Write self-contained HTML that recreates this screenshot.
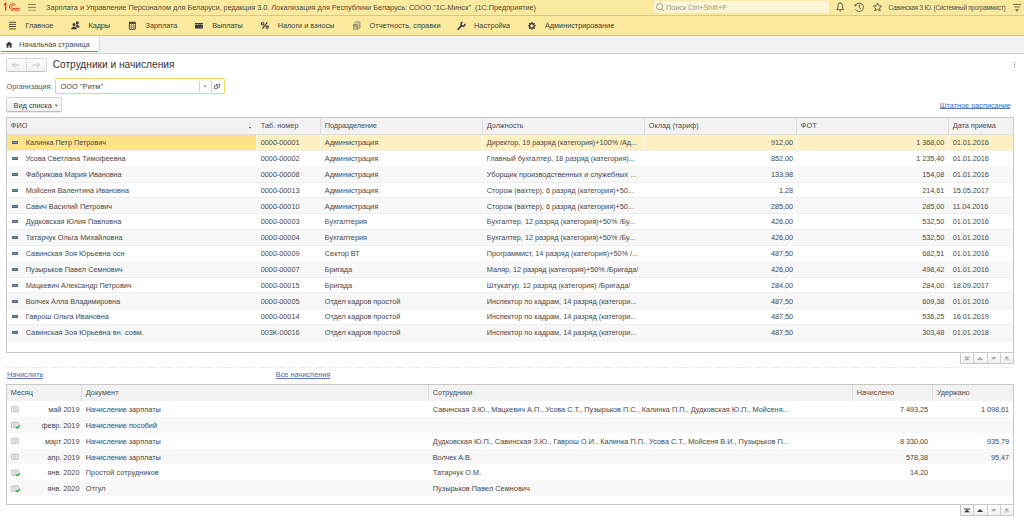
<!DOCTYPE html><html><head><meta charset="utf-8"><style>
*{box-sizing:border-box;margin:0;padding:0}
html,body{width:1024px;height:523px;overflow:hidden;background:#fff;font-family:"Liberation Sans",sans-serif;color:#484848}
.t{position:absolute;white-space:pre;line-height:1}
.r{position:absolute}
svg{position:absolute;overflow:visible}
</style></head><body>
<div class="r" style="left:0px;top:0px;width:1024px;height:15px;background:#faea9f;"></div>
<div class="r" style="left:0px;top:15px;width:1024px;height:1px;background:#d6c886;"></div>
<div class="r" style="left:0px;top:16px;width:1024px;height:19px;background:#fbea9d;"></div>
<div class="r" style="left:0px;top:35px;width:1024px;height:1px;background:#d5c684;"></div>
<div class="r" style="left:0px;top:36px;width:1024px;height:17px;background:#f2f2f2;"></div>
<div class="r" style="left:0px;top:53px;width:1024px;height:1px;background:#d0d0d0;"></div>
<div class="r" style="left:0px;top:36px;width:99px;height:17px;background:#ffffff;"></div>
<div class="r" style="left:99px;top:36px;width:1px;height:17px;background:#dadada;"></div>
<div class="r" style="left:1px;top:51px;width:97px;height:1.4px;background:#3fae5e;"></div>
<div class="t" style="left:46px;top:4px;font-size:7.3333px;color:#4a4a3a;letter-spacing:-0.027px;">Зарплата и Управление Персоналом для Беларуси, редакция 3.0. Локализация для Республики Беларусь: СООО &quot;1С-Минск&quot;  (1С:Предприятие)</div>
<div class="r" style="left:654px;top:1px;width:175px;height:12.3px;background:#fdf6d6;"></div>
<div class="t" style="left:666px;top:4px;font-size:7.3333px;color:#9a9a8a;letter-spacing:-0.045px;">Поиск Ctrl+Shift+F</div>
<div class="t" style="left:888.5px;top:5px;font-size:6.3px;color:#505048;letter-spacing:-0.235px;">Савинская З.Ю. (Системный программист)</div>
<div class="t" style="left:25.6px;top:22px;font-size:7.3333px;color:#3d3d30;letter-spacing:-0.062px;">Главное</div>
<div class="t" style="left:88.6px;top:22px;font-size:7.3333px;color:#3d3d30;letter-spacing:-0.129px;">Кадры</div>
<div class="t" style="left:145.6px;top:22px;font-size:7.3333px;color:#3d3d30;letter-spacing:-0.044px;">Зарплата</div>
<div class="t" style="left:212.3px;top:22px;font-size:7.3333px;color:#3d3d30;letter-spacing:-0.065px;">Выплаты</div>
<div class="t" style="left:277.7px;top:22px;font-size:7.3333px;color:#3d3d30;letter-spacing:-0.022px;">Налоги и взносы</div>
<div class="t" style="left:369.5px;top:22px;font-size:7.3333px;color:#3d3d30;letter-spacing:0.051px;">Отчетность, справки</div>
<div class="t" style="left:474px;top:22px;font-size:7.3333px;color:#3d3d30;letter-spacing:0.007px;">Настройка</div>
<div class="t" style="left:545px;top:22px;font-size:7.3333px;color:#3d3d30;letter-spacing:-0.040px;">Администрирование</div>
<div class="t" style="left:19.1px;top:41px;font-size:7.3333px;color:#4a4a4a;letter-spacing:-0.025px;">Начальная страница</div>
<div class="t" style="left:52.7px;top:60px;font-size:10.17px;color:#333333;">Сотрудники и начисления</div>
<svg style="left:0;top:0" width="1024" height="523"><g fill="none" stroke="#e0352b"><path d="M5.7 10.8 V3.3 L3.9 4.9" stroke-width="1.3"/><path d="M15.5 5.3 A3.2 3.2 0 1 0 12.7 10.1" stroke-width="1.0"/><path d="M14.1 6.1 A1.6 1.6 0 1 0 12.7 8.5" stroke-width="0.9"/><path d="M12.4 8.4 H19.7 M12.4 10.1 H19.7" stroke-width="0.95"/></g><path d="M28.1 4.5 H35.9 M28.1 7.4 H35.9" stroke="#6f6a55" stroke-width="0.9"/><path d="M28.1 10.3 H35.9" stroke="#9e9878" stroke-width="0.9"/><path d="M9 22.3 H16 M9 24.4 H16 M9 26.5 H16" stroke="#46464a" stroke-width="0.95"/><path d="M9 28.9 H16" stroke="#8b8670" stroke-width="1.5"/><circle cx="77.3" cy="22.9" r="1.55" fill="#3e3e42"/><path d="M75.2 27.6 Q75.6 24.8 77.3 24.8 Q79.4 24.8 79.7 27.6z" fill="#3e3e42"/><circle cx="74.0" cy="24.6" r="1.75" fill="#2f2f33" stroke="#fbe99e" stroke-width="0.6"/><path d="M71 29.4 Q71.2 26.4 74 26.4 Q76.8 26.4 77.2 29.4z" fill="#2f2f33" stroke="#fbe99e" stroke-width="0.5"/><rect x="129.3" y="22.2" width="6.1" height="7.2" fill="none" stroke="#3b3b3e" stroke-width="0.9" rx="0.5"/><rect x="129.3" y="22.2" width="6.1" height="1.7" fill="#3b3b3e"/><path d="M131.4 24 V29.3 M133.4 24 V29.3 M129.5 25.8 H135.2 M129.5 27.6 H135.2" stroke="#6a6a60" stroke-width="0.6"/><rect x="195" y="23" width="7.9" height="1.0" fill="#3a3a3e"/><rect x="195" y="24.6" width="7.9" height="3.8" fill="#3a3a3e" rx="0.3"/><rect x="200.6" y="26.6" width="1.6" height="1.0" fill="#77756a"/></svg>
<svg style="left:0;top:0" width="1024" height="523"><circle cx="262.6" cy="23.8" r="1.25" fill="none" stroke="#3a3a3e" stroke-width="1.1"/><circle cx="267.2" cy="27.1" r="1.25" fill="none" stroke="#3a3a3e" stroke-width="1.1"/><path d="M267.3 22.2 L262.4 28.7" stroke="#3a3a3e" stroke-width="1.1"/></svg>
<svg style="left:0;top:0" width="1024" height="523"><path d="M354.8 21.9 H360 V28 H358.6" fill="none" stroke="#9c9674" stroke-width="0.9"/><path d="M353.8 22.9 H359 V29 H357.6" fill="none" stroke="#9c9674" stroke-width="0.9"/><rect x="352.9" y="24" width="5" height="5.6" fill="#9c9674"/><rect x="353.8" y="27.4" width="2.6" height="1.0" fill="#fbe99e"/><path d="M458 29.2 L461.6 25.6" stroke="#3a3a3e" stroke-width="1.6" stroke-linecap="round"/><path d="M464.9 23.9 A2.0 2.0 0 1 1 462.6 22.3" fill="none" stroke="#3a3a3e" stroke-width="1.5"/><g transform="translate(531.9 25.8)"><circle r="2.3" fill="none" stroke="#3a3a3e" stroke-width="1.3"/><path d="M0 -3.9 V-2.4 M0 3.9 V2.4 M-3.9 0 H-2.4 M3.9 0 H2.4 M-2.75 -2.75 L-1.7 -1.7 M2.75 2.75 L1.7 1.7 M-2.75 2.75 L-1.7 1.7 M2.75 -2.75 L1.7 -1.7" stroke="#3a3a3e" stroke-width="1.1"/></g><circle cx="659.6" cy="6.6" r="3.1" fill="none" stroke="#8a8a80" stroke-width="0.8"/><path d="M661.8 8.8 L664 11" stroke="#8a8a80" stroke-width="0.9"/><path d="M836.7 9.6 H843.8 L842.6 8.1 V5.8 Q842.6 3.2 840.2 3.0 Q837.9 3.2 837.9 5.8 V8.1z" fill="none" stroke="#4a4a40" stroke-width="0.85" stroke-linejoin="round"/><path d="M839.1 10.4 H841.3 L840.2 11.7z" fill="#4a4a40"/><path d="M840.2 2.2 V3.0" stroke="#4a4a40" stroke-width="0.8"/><path d="M855.4 5.4 A4.2 4.2 0 1 1 855.4 9.2" fill="none" stroke="#4a4a40" stroke-width="0.85"/><path d="M854.3 4.2 L856.9 4.9 L855.2 6.8z" fill="#4a4a40"/><path d="M859.3 4.6 V7.6 L860.9 9" fill="none" stroke="#4a4a40" stroke-width="0.85"/><path d="M877.5 3.1 L878.8 5.8 L881.7 6.1 L879.5 8.0 L880.2 10.8 L877.5 9.3 L874.8 10.8 L875.5 8.0 L873.3 6.1 L876.2 5.8z" fill="none" stroke="#4a4a40" stroke-width="0.85" stroke-linejoin="round"/><path d="M1012.9 4.4 H1021.2 M1014.0 6.9 H1020.1 M1015.3 9.6 H1018.8" stroke="#4a4a40" stroke-width="0.8"/><path d="M1016.3 10.8 H1017.8" stroke="#2a2a2a" stroke-width="1.0"/><path d="M5.6 44.6 L9.1 41.4 L12.6 44.6 H11.6 V47.8 H6.6 V44.6z" fill="#3a3a3a"/><rect x="8.4" y="45.6" width="1.4" height="2.3" fill="#fff"/></svg>
<div class="r" style="left:6px;top:58px;width:41px;height:14px;background:linear-gradient(#fdfdfd,#f1f1f1);border:1px solid #d8d8d8;border-bottom-color:#c4c4c4;border-radius:2px;"></div>
<div class="r" style="left:26px;top:59px;width:1px;height:12px;background:#dcdcdc;"></div>
<svg style="left:0;top:0" width="1024" height="523"><path d="M12.5 65 h7 M12.5 65 l2.6 -2.6 M12.5 65 l2.6 2.6" stroke="#c4c4c4" stroke-width="1" fill="none"/><path d="M39.5 65 h-7 M39.5 65 l-2.6 -2.6 M39.5 65 l-2.6 2.6" stroke="#c4c4c4" stroke-width="1" fill="none"/></svg>
<div class="t" style="left:6.6px;top:83px;font-size:7.3333px;color:#555555;letter-spacing:-0.036px;">Организация:</div>
<div class="r" style="left:55px;top:78.3px;width:169.6px;height:15.6px;background:#ffffff;border:1.4px solid #f7d35a;border-radius:1.5px;"></div>
<div class="t" style="left:60.5px;top:83px;font-size:7.3333px;color:#404040;letter-spacing:0.092px;">ООО &quot;Ритм&quot;</div>
<div class="r" style="left:199px;top:80.6px;width:1px;height:11.4px;background:#d2d2d2;"></div>
<div class="r" style="left:211px;top:80.6px;width:1px;height:11.4px;background:#d2d2d2;"></div>
<svg style="left:0;top:0" width="1024" height="523"><path d="M203.9 85.8 h2.4 l-1.2 1.3z" fill="#333"/><rect x="216.3" y="84.3" width="3.4" height="2.8" fill="#fff" stroke="#555" stroke-width="0.7"/><rect x="214.5" y="85.9" width="3.0" height="2.6" fill="#fff" stroke="#555" stroke-width="0.7"/></svg>
<div class="r" style="left:6px;top:97px;width:56px;height:15px;background:linear-gradient(#fdfdfd,#f0f0f0);border:1px solid #d4d4d4;border-bottom-color:#bdbdbd;border-radius:2px;box-shadow:0 1px 1px rgba(0,0,0,0.10);"></div>
<div class="t" style="left:13.6px;top:102px;font-size:7.3333px;color:#444444;letter-spacing:0.001px;">Вид списка</div>
<svg style="left:0;top:0" width="1024" height="523"><path d="M54.8 104.8 h3 l-1.5 1.6z" fill="#555"/></svg>
<div class="t" style="left:939.8px;top:102px;font-size:7.3333px;color:#4169b5;letter-spacing:-0.016px;">Штатное расписание</div>
<div class="r" style="left:939.8px;top:108.4px;width:70.53333333333333px;height:0.8px;background:#5a7fc0;"></div>
<div class="r" style="left:1014.3px;top:62.2px;width:0.9px;height:1.0px;background:#777;"></div>
<div class="r" style="left:1014.3px;top:64.3px;width:0.9px;height:1.0px;background:#777;"></div>
<div class="r" style="left:1014.3px;top:66.4px;width:0.9px;height:1.0px;background:#777;"></div>
<div class="r" style="left:6px;top:117px;width:1008px;height:236px;background:#ffffff;border:1px solid #c9c9c9;"></div>
<div class="r" style="left:7px;top:118px;width:1006px;height:16px;background:#f2f2f2;"></div>
<div class="r" style="left:7px;top:134px;width:1006px;height:1px;background:#dddde2;"></div>
<div class="r" style="left:256px;top:118px;width:1px;height:16px;background:#f7f7f7;"></div>
<div class="r" style="left:320px;top:118px;width:1px;height:16px;background:#dcdcdc;"></div>
<div class="r" style="left:482px;top:118px;width:1px;height:16px;background:#dcdcdc;"></div>
<div class="r" style="left:644px;top:118px;width:1px;height:16px;background:#dcdcdc;"></div>
<div class="r" style="left:796px;top:118px;width:1px;height:16px;background:#dcdcdc;"></div>
<div class="r" style="left:948px;top:118px;width:1px;height:16px;background:#dcdcdc;"></div>
<div class="t" style="left:10.8px;top:122px;font-size:7.3333px;color:#4d4d4d;letter-spacing:0.039px;">ФИО</div>
<div class="t" style="left:260.8px;top:122px;font-size:7.3333px;color:#4d4d4d;letter-spacing:-0.016px;">Таб. номер</div>
<div class="t" style="left:324.8px;top:122px;font-size:7.3333px;color:#4d4d4d;letter-spacing:-0.109px;">Подразделение</div>
<div class="t" style="left:486.8px;top:122px;font-size:7.3333px;color:#4d4d4d;letter-spacing:-0.060px;">Должность</div>
<div class="t" style="left:648.8px;top:122px;font-size:7.3333px;color:#4d4d4d;letter-spacing:-0.009px;">Оклад (тариф)</div>
<div class="t" style="left:800.8px;top:122px;font-size:7.3333px;color:#4d4d4d;letter-spacing:0.080px;">ФОТ</div>
<div class="t" style="left:952.8px;top:122px;font-size:7.3333px;color:#4d4d4d;letter-spacing:-0.048px;">Дата приема</div>
<svg style="left:0;top:0" width="1024" height="523"><path d="M250 122.2 v5.2" stroke="#d4cccc" stroke-width="0.9"/><path d="M248.8 127 h2.4 l-1.2 1.7z" fill="#555"/></svg>
<div class="r" style="left:7px;top:134.6px;width:1006px;height:15.3px;background:#fdf0c3;"></div>
<div class="r" style="left:7px;top:134.6px;width:249px;height:15.3px;background:#fde38a;"></div>
<div class="r" style="left:256px;top:134.6px;width:1px;height:15.3px;background:#fffbe8;"></div>
<div class="r" style="left:320px;top:134.6px;width:1px;height:15.3px;background:#fffbe8;"></div>
<div class="r" style="left:482px;top:134.6px;width:1px;height:15.3px;background:#fffbe8;"></div>
<div class="r" style="left:644px;top:134.6px;width:1px;height:15.3px;background:#fffbe8;"></div>
<div class="r" style="left:796px;top:134.6px;width:1px;height:15.3px;background:#fffbe8;"></div>
<div class="r" style="left:948px;top:134.6px;width:1px;height:15.3px;background:#fffbe8;"></div>
<div class="r" style="left:7px;top:149.9px;width:1006px;height:1px;background:#eeeeee;"></div>
<div class="r" style="left:12.3px;top:141.0px;width:5.8px;height:2.9px;background:#6f9fd4;border:0.8px solid #4f6078;border-radius:0.4px;"></div>
<div class="t" style="left:25.7px;top:139px;font-size:7.3333px;color:#484848;letter-spacing:-0.044px;">Калинка Петр Петрович</div>
<div class="t" style="left:260.8px;top:139px;font-size:7.3333px;color:#484848;letter-spacing:-0.048px;">0000-00001</div>
<div class="t" style="left:324.8px;top:139px;font-size:7.3333px;color:#484848;letter-spacing:-0.044px;">Администрация</div>
<div class="t" style="left:486.8px;top:139px;font-size:7.3333px;color:#484848;letter-spacing:-0.054px;">Директор, 19 разряд (категория)+100% /Ад...</div>
<div class="t" style="left:644px;top:139px;font-size:7.3333px;color:#484848;width:149.02840240885416px;text-align:right;letter-spacing:-0.072px;">912,00</div>
<div class="t" style="left:796px;top:139px;font-size:7.3333px;color:#484848;width:148.2318196044922px;text-align:right;letter-spacing:-0.068px;">1 368,00</div>
<div class="t" style="left:952.8px;top:139px;font-size:7.3333px;color:#484848;letter-spacing:-0.070px;">01.01.2016</div>
<div class="r" style="left:7px;top:165.73000000000002px;width:1006px;height:1px;background:#eeeeee;"></div>
<div class="r" style="left:12.3px;top:157.0px;width:5.8px;height:2.9px;background:#6f9fd4;border:0.8px solid #4f6078;border-radius:0.4px;"></div>
<div class="t" style="left:25.7px;top:155px;font-size:7.3333px;color:#484848;letter-spacing:-0.006px;">Усова Светлана Тимофеевна</div>
<div class="t" style="left:260.8px;top:155px;font-size:7.3333px;color:#484848;letter-spacing:-0.048px;">0000-00002</div>
<div class="t" style="left:324.8px;top:155px;font-size:7.3333px;color:#484848;letter-spacing:-0.044px;">Администрация</div>
<div class="t" style="left:486.8px;top:155px;font-size:7.3333px;color:#484848;letter-spacing:-0.028px;">Главный бухгалтер, 18 разряд (категория)...</div>
<div class="t" style="left:644px;top:155px;font-size:7.3333px;color:#484848;width:149.02840240885416px;text-align:right;letter-spacing:-0.072px;">852,00</div>
<div class="t" style="left:796px;top:155px;font-size:7.3333px;color:#484848;width:148.2318196044922px;text-align:right;letter-spacing:-0.068px;">1 235,40</div>
<div class="t" style="left:952.8px;top:155px;font-size:7.3333px;color:#484848;letter-spacing:-0.070px;">01.01.2016</div>
<div class="r" style="left:7px;top:166.26px;width:1006px;height:15.83px;background:#f8f8f8;"></div>
<div class="r" style="left:7px;top:181.56px;width:1006px;height:1px;background:#eeeeee;"></div>
<div class="r" style="left:12.3px;top:173.0px;width:5.8px;height:2.9px;background:#6f9fd4;border:0.8px solid #4f6078;border-radius:0.4px;"></div>
<div class="t" style="left:25.7px;top:171px;font-size:7.3333px;color:#484848;letter-spacing:-0.046px;">Фабрикова Мария Ивановна</div>
<div class="t" style="left:260.8px;top:171px;font-size:7.3333px;color:#484848;letter-spacing:-0.048px;">0000-00008</div>
<div class="t" style="left:324.8px;top:171px;font-size:7.3333px;color:#484848;letter-spacing:-0.044px;">Администрация</div>
<div class="t" style="left:486.8px;top:171px;font-size:7.3333px;color:#484848;letter-spacing:-0.009px;">Уборщик производственных и служебных ...</div>
<div class="t" style="left:644px;top:171px;font-size:7.3333px;color:#484848;width:149.02840240885416px;text-align:right;letter-spacing:-0.072px;">133,98</div>
<div class="t" style="left:796px;top:171px;font-size:7.3333px;color:#484848;width:148.22840240885418px;text-align:right;letter-spacing:-0.072px;">154,08</div>
<div class="t" style="left:952.8px;top:171px;font-size:7.3333px;color:#484848;letter-spacing:-0.070px;">01.01.2016</div>
<div class="r" style="left:7px;top:197.39000000000001px;width:1006px;height:1px;background:#eeeeee;"></div>
<div class="r" style="left:12.3px;top:189.0px;width:5.8px;height:2.9px;background:#6f9fd4;border:0.8px solid #4f6078;border-radius:0.4px;"></div>
<div class="t" style="left:25.7px;top:187px;font-size:7.3333px;color:#484848;letter-spacing:-0.044px;">Мойсеня Валентина Ивановна</div>
<div class="t" style="left:260.8px;top:187px;font-size:7.3333px;color:#484848;letter-spacing:-0.048px;">0000-00013</div>
<div class="t" style="left:324.8px;top:187px;font-size:7.3333px;color:#484848;letter-spacing:-0.044px;">Администрация</div>
<div class="t" style="left:486.8px;top:187px;font-size:7.3333px;color:#484848;letter-spacing:-0.023px;">Сторож (вахтер), 6 разряд (категория)+50...</div>
<div class="t" style="left:644px;top:187px;font-size:7.3333px;color:#484848;width:149.03181960449217px;text-align:right;letter-spacing:-0.068px;">1,28</div>
<div class="t" style="left:796px;top:187px;font-size:7.3333px;color:#484848;width:148.22840240885418px;text-align:right;letter-spacing:-0.072px;">214,61</div>
<div class="t" style="left:952.8px;top:187px;font-size:7.3333px;color:#484848;letter-spacing:-0.070px;">15.05.2017</div>
<div class="r" style="left:7px;top:197.92px;width:1006px;height:15.83px;background:#f8f8f8;"></div>
<div class="r" style="left:7px;top:213.22px;width:1006px;height:1px;background:#eeeeee;"></div>
<div class="r" style="left:12.3px;top:205.0px;width:5.8px;height:2.9px;background:#6f9fd4;border:0.8px solid #4f6078;border-radius:0.4px;"></div>
<div class="t" style="left:25.7px;top:203px;font-size:7.3333px;color:#484848;letter-spacing:-0.022px;">Савич Василий Петрович</div>
<div class="t" style="left:260.8px;top:203px;font-size:7.3333px;color:#484848;letter-spacing:-0.048px;">0000-00010</div>
<div class="t" style="left:324.8px;top:203px;font-size:7.3333px;color:#484848;letter-spacing:-0.044px;">Администрация</div>
<div class="t" style="left:486.8px;top:203px;font-size:7.3333px;color:#484848;letter-spacing:-0.023px;">Сторож (вахтер), 6 разряд (категория)+50...</div>
<div class="t" style="left:644px;top:203px;font-size:7.3333px;color:#484848;width:149.02840240885416px;text-align:right;letter-spacing:-0.072px;">285,00</div>
<div class="t" style="left:796px;top:203px;font-size:7.3333px;color:#484848;width:148.22840240885418px;text-align:right;letter-spacing:-0.072px;">285,00</div>
<div class="t" style="left:952.8px;top:203px;font-size:7.3333px;color:#484848;letter-spacing:-0.070px;">11.04.2016</div>
<div class="r" style="left:7px;top:229.05px;width:1006px;height:1px;background:#eeeeee;"></div>
<div class="r" style="left:12.3px;top:220.0px;width:5.8px;height:2.9px;background:#6f9fd4;border:0.8px solid #4f6078;border-radius:0.4px;"></div>
<div class="t" style="left:25.7px;top:218px;font-size:7.3333px;color:#484848;letter-spacing:-0.020px;">Дудковская Юлия Павловна</div>
<div class="t" style="left:260.8px;top:218px;font-size:7.3333px;color:#484848;letter-spacing:-0.048px;">0000-00003</div>
<div class="t" style="left:324.8px;top:218px;font-size:7.3333px;color:#484848;letter-spacing:-0.009px;">Бухгалтерия</div>
<div class="t" style="left:486.8px;top:218px;font-size:7.3333px;color:#484848;letter-spacing:-0.023px;">Бухгалтер, 12 разряд (категория)+50% /Бу...</div>
<div class="t" style="left:644px;top:218px;font-size:7.3333px;color:#484848;width:149.02840240885416px;text-align:right;letter-spacing:-0.072px;">426,00</div>
<div class="t" style="left:796px;top:218px;font-size:7.3333px;color:#484848;width:148.22840240885418px;text-align:right;letter-spacing:-0.072px;">532,50</div>
<div class="t" style="left:952.8px;top:218px;font-size:7.3333px;color:#484848;letter-spacing:-0.070px;">01.01.2016</div>
<div class="r" style="left:7px;top:229.57999999999998px;width:1006px;height:15.83px;background:#f8f8f8;"></div>
<div class="r" style="left:7px;top:244.88px;width:1006px;height:1px;background:#eeeeee;"></div>
<div class="r" style="left:12.3px;top:236.0px;width:5.8px;height:2.9px;background:#6f9fd4;border:0.8px solid #4f6078;border-radius:0.4px;"></div>
<div class="t" style="left:25.7px;top:234px;font-size:7.3333px;color:#484848;letter-spacing:0.007px;">Татарчук Ольга Михайловна</div>
<div class="t" style="left:260.8px;top:234px;font-size:7.3333px;color:#484848;letter-spacing:-0.048px;">0000-00004</div>
<div class="t" style="left:324.8px;top:234px;font-size:7.3333px;color:#484848;letter-spacing:-0.009px;">Бухгалтерия</div>
<div class="t" style="left:486.8px;top:234px;font-size:7.3333px;color:#484848;letter-spacing:-0.023px;">Бухгалтер, 12 разряд (категория)+50% /Бу...</div>
<div class="t" style="left:644px;top:234px;font-size:7.3333px;color:#484848;width:149.02840240885416px;text-align:right;letter-spacing:-0.072px;">426,00</div>
<div class="t" style="left:796px;top:234px;font-size:7.3333px;color:#484848;width:148.22840240885418px;text-align:right;letter-spacing:-0.072px;">532,50</div>
<div class="t" style="left:952.8px;top:234px;font-size:7.3333px;color:#484848;letter-spacing:-0.070px;">01.01.2016</div>
<div class="r" style="left:7px;top:260.71px;width:1006px;height:1px;background:#eeeeee;"></div>
<div class="r" style="left:12.3px;top:252.0px;width:5.8px;height:2.9px;background:#6f9fd4;border:0.8px solid #4f6078;border-radius:0.4px;"></div>
<div class="t" style="left:25.7px;top:250px;font-size:7.3333px;color:#484848;letter-spacing:0.021px;">Савинская Зоя Юрьевна осн</div>
<div class="t" style="left:260.8px;top:250px;font-size:7.3333px;color:#484848;letter-spacing:-0.048px;">0000-00009</div>
<div class="t" style="left:324.8px;top:250px;font-size:7.3333px;color:#484848;letter-spacing:-0.019px;">Сектор ВТ</div>
<div class="t" style="left:486.8px;top:250px;font-size:7.3333px;color:#484848;letter-spacing:-0.014px;">Программист, 14 разряд (категория)+50% /...</div>
<div class="t" style="left:644px;top:250px;font-size:7.3333px;color:#484848;width:149.02840240885416px;text-align:right;letter-spacing:-0.072px;">487,50</div>
<div class="t" style="left:796px;top:250px;font-size:7.3333px;color:#484848;width:148.22840240885418px;text-align:right;letter-spacing:-0.072px;">682,51</div>
<div class="t" style="left:952.8px;top:250px;font-size:7.3333px;color:#484848;letter-spacing:-0.070px;">01.01.2016</div>
<div class="r" style="left:7px;top:261.24px;width:1006px;height:15.83px;background:#f8f8f8;"></div>
<div class="r" style="left:7px;top:276.54px;width:1006px;height:1px;background:#eeeeee;"></div>
<div class="r" style="left:12.3px;top:268.0px;width:5.8px;height:2.9px;background:#6f9fd4;border:0.8px solid #4f6078;border-radius:0.4px;"></div>
<div class="t" style="left:25.7px;top:266px;font-size:7.3333px;color:#484848;letter-spacing:0.027px;">Пузырьков Павел Семнович</div>
<div class="t" style="left:260.8px;top:266px;font-size:7.3333px;color:#484848;letter-spacing:-0.048px;">0000-00007</div>
<div class="t" style="left:324.8px;top:266px;font-size:7.3333px;color:#484848;letter-spacing:-0.109px;">Бригада</div>
<div class="t" style="left:486.8px;top:266px;font-size:7.3333px;color:#484848;letter-spacing:-0.056px;">Маляр, 12 разряд (категория)+50% /Бригада/</div>
<div class="t" style="left:644px;top:266px;font-size:7.3333px;color:#484848;width:149.02840240885416px;text-align:right;letter-spacing:-0.072px;">426,00</div>
<div class="t" style="left:796px;top:266px;font-size:7.3333px;color:#484848;width:148.22840240885418px;text-align:right;letter-spacing:-0.072px;">498,42</div>
<div class="t" style="left:952.8px;top:266px;font-size:7.3333px;color:#484848;letter-spacing:-0.070px;">01.01.2016</div>
<div class="r" style="left:7px;top:292.37px;width:1006px;height:1px;background:#eeeeee;"></div>
<div class="r" style="left:12.3px;top:284.0px;width:5.8px;height:2.9px;background:#6f9fd4;border:0.8px solid #4f6078;border-radius:0.4px;"></div>
<div class="t" style="left:25.7px;top:282px;font-size:7.3333px;color:#484848;letter-spacing:-0.031px;">Мацкевич Александр Петрович</div>
<div class="t" style="left:260.8px;top:282px;font-size:7.3333px;color:#484848;letter-spacing:-0.048px;">0000-00015</div>
<div class="t" style="left:324.8px;top:282px;font-size:7.3333px;color:#484848;letter-spacing:-0.109px;">Бригада</div>
<div class="t" style="left:486.8px;top:282px;font-size:7.3333px;color:#484848;letter-spacing:-0.025px;">Штукатур, 12 разряд (категория) /Бригада/</div>
<div class="t" style="left:644px;top:282px;font-size:7.3333px;color:#484848;width:149.02840240885416px;text-align:right;letter-spacing:-0.072px;">284,00</div>
<div class="t" style="left:796px;top:282px;font-size:7.3333px;color:#484848;width:148.22840240885418px;text-align:right;letter-spacing:-0.072px;">284,00</div>
<div class="t" style="left:952.8px;top:282px;font-size:7.3333px;color:#484848;letter-spacing:-0.070px;">18.09.2017</div>
<div class="r" style="left:7px;top:292.9px;width:1006px;height:15.83px;background:#f8f8f8;"></div>
<div class="r" style="left:7px;top:308.2px;width:1006px;height:1px;background:#eeeeee;"></div>
<div class="r" style="left:12.3px;top:300.0px;width:5.8px;height:2.9px;background:#6f9fd4;border:0.8px solid #4f6078;border-radius:0.4px;"></div>
<div class="t" style="left:25.7px;top:298px;font-size:7.3333px;color:#484848;letter-spacing:-0.093px;">Волчек Алла Владимировна</div>
<div class="t" style="left:260.8px;top:298px;font-size:7.3333px;color:#484848;letter-spacing:-0.048px;">0000-00005</div>
<div class="t" style="left:324.8px;top:298px;font-size:7.3333px;color:#484848;letter-spacing:-0.036px;">Отдел кадров простой</div>
<div class="t" style="left:486.8px;top:298px;font-size:7.3333px;color:#484848;letter-spacing:-0.023px;">Инспектор по кадрам, 14 разряд (категори...</div>
<div class="t" style="left:644px;top:298px;font-size:7.3333px;color:#484848;width:149.02840240885416px;text-align:right;letter-spacing:-0.072px;">487,50</div>
<div class="t" style="left:796px;top:298px;font-size:7.3333px;color:#484848;width:148.22840240885418px;text-align:right;letter-spacing:-0.072px;">609,38</div>
<div class="t" style="left:952.8px;top:298px;font-size:7.3333px;color:#484848;letter-spacing:-0.070px;">01.01.2016</div>
<div class="r" style="left:7px;top:324.03000000000003px;width:1006px;height:1px;background:#eeeeee;"></div>
<div class="r" style="left:12.3px;top:315.0px;width:5.8px;height:2.9px;background:#6f9fd4;border:0.8px solid #4f6078;border-radius:0.4px;"></div>
<div class="t" style="left:25.7px;top:313px;font-size:7.3333px;color:#484848;letter-spacing:-0.001px;">Гаврош Ольга Ивановна</div>
<div class="t" style="left:260.8px;top:313px;font-size:7.3333px;color:#484848;letter-spacing:-0.048px;">0000-00014</div>
<div class="t" style="left:324.8px;top:313px;font-size:7.3333px;color:#484848;letter-spacing:-0.036px;">Отдел кадров простой</div>
<div class="t" style="left:486.8px;top:313px;font-size:7.3333px;color:#484848;letter-spacing:-0.023px;">Инспектор по кадрам, 14 разряд (категори...</div>
<div class="t" style="left:644px;top:313px;font-size:7.3333px;color:#484848;width:149.02840240885416px;text-align:right;letter-spacing:-0.072px;">487,50</div>
<div class="t" style="left:796px;top:313px;font-size:7.3333px;color:#484848;width:148.22840240885418px;text-align:right;letter-spacing:-0.072px;">536,25</div>
<div class="t" style="left:952.8px;top:313px;font-size:7.3333px;color:#484848;letter-spacing:-0.070px;">16.01.2019</div>
<div class="r" style="left:7px;top:324.56px;width:1006px;height:15.83px;background:#f8f8f8;"></div>
<div class="r" style="left:7px;top:339.86px;width:1006px;height:1px;background:#eeeeee;"></div>
<div class="r" style="left:12.3px;top:331.0px;width:5.8px;height:2.9px;background:#6f9fd4;border:0.8px solid #4f6078;border-radius:0.4px;"></div>
<div class="t" style="left:25.7px;top:329px;font-size:7.3333px;color:#484848;letter-spacing:0.030px;">Савинская Зоя Юрьевна вн. совм.</div>
<div class="t" style="left:260.8px;top:329px;font-size:7.3333px;color:#484848;letter-spacing:-0.067px;">003К-00016</div>
<div class="t" style="left:324.8px;top:329px;font-size:7.3333px;color:#484848;letter-spacing:-0.036px;">Отдел кадров простой</div>
<div class="t" style="left:486.8px;top:329px;font-size:7.3333px;color:#484848;letter-spacing:-0.023px;">Инспектор по кадрам, 14 разряд (категори...</div>
<div class="t" style="left:644px;top:329px;font-size:7.3333px;color:#484848;width:149.02840240885416px;text-align:right;letter-spacing:-0.072px;">487,50</div>
<div class="t" style="left:796px;top:329px;font-size:7.3333px;color:#484848;width:148.22840240885418px;text-align:right;letter-spacing:-0.072px;">303,48</div>
<div class="t" style="left:952.8px;top:329px;font-size:7.3333px;color:#484848;letter-spacing:-0.070px;">01.01.2018</div>
<div class="r" style="left:960px;top:352.6px;width:54px;height:11.6px;background:linear-gradient(#ffffff,#f0f0f0);border:1px solid #c8c8c8;border-top:none;"></div>
<div class="r" style="left:973px;top:353px;width:1px;height:10.8px;background:#cdcdcd;"></div>
<div class="r" style="left:987px;top:353px;width:1px;height:10.8px;background:#cdcdcd;"></div>
<div class="r" style="left:1000px;top:353px;width:1px;height:10.8px;background:#cdcdcd;"></div>
<svg style="left:0;top:0" width="1024" height="523">
<path d="M964 356.5 h6 v0.9 h-6z M964.1 360.2 h5.8 l-2.9 -2.8z" fill="#a9a9a9"/>
<path d="M977 360.1 h6.2 l-3.1 -3.0z" fill="#a9a9a9"/>
<path d="M991 357.1 h5.5 l-2.75 2.8z" fill="#a9a9a9"/>
<path d="M1004 359.5 h5.4 v0.8 h-5.4z M1004.1 356.8 h5.2 l-2.6 2.5z" fill="#a9a9a9"/>
</svg>
<div class="r" style="left:6px;top:367px;width:1008px;height:1px;background:repeating-linear-gradient(90deg,#e0e0e0 0 1.2px,transparent 1.2px 2.85px)"></div>
<div class="t" style="left:6.9px;top:371px;font-size:7.3333px;color:#4169b5;letter-spacing:0.017px;">Начислить</div>
<div class="r" style="left:6.9px;top:377.6px;width:35.86666666666667px;height:0.8px;background:#5a7fc0;"></div>
<div class="t" style="left:275.8px;top:371px;font-size:7.3333px;color:#4169b5;letter-spacing:-0.014px;">Все начисления</div>
<div class="r" style="left:275.8px;top:377.6px;width:53.86666666666667px;height:0.8px;background:#5a7fc0;"></div>
<div class="r" style="left:6px;top:384px;width:1008px;height:121px;background:#ffffff;border:1px solid #c9c9c9;"></div>
<div class="r" style="left:7px;top:385px;width:1006px;height:16px;background:#f2f2f2;"></div>
<div class="r" style="left:81px;top:385px;width:1px;height:16px;background:#dcdcdc;"></div>
<div class="r" style="left:428px;top:385px;width:1px;height:16px;background:#dcdcdc;"></div>
<div class="r" style="left:852px;top:385px;width:1px;height:16px;background:#dcdcdc;"></div>
<div class="r" style="left:932px;top:385px;width:1px;height:16px;background:#dcdcdc;"></div>
<div class="t" style="left:10.8px;top:389px;font-size:7.3333px;color:#4d4d4d;letter-spacing:-0.005px;">Месяц</div>
<div class="t" style="left:85.8px;top:389px;font-size:7.3333px;color:#4d4d4d;letter-spacing:0.027px;">Документ</div>
<div class="t" style="left:432.8px;top:389px;font-size:7.3333px;color:#4d4d4d;letter-spacing:-0.021px;">Сотрудники</div>
<div class="t" style="left:856.8px;top:389px;font-size:7.3333px;color:#4d4d4d;letter-spacing:-0.012px;">Начислено</div>
<div class="t" style="left:936.8px;top:389px;font-size:7.3333px;color:#4d4d4d;letter-spacing:-0.109px;">Удержано</div>
<svg style="left:0;top:0" width="1024" height="523"><rect x="11.3" y="406.4" width="7.3" height="5.6" rx="0.9" fill="#d6dae1" stroke="#bcc3cd" stroke-width="0.8"/><path d="M12.6 407.29999999999995 v3.8 M17.3 407.29999999999995 v3.8" stroke="#f4f5f7" stroke-width="0.7"/></svg>
<div class="t" style="left:6px;top:406px;font-size:7.3333px;color:#484848;width:73.47072106119792px;text-align:right;letter-spacing:-0.029px;">май 2019</div>
<div class="t" style="left:85.8px;top:406px;font-size:7.3333px;color:#484848;letter-spacing:-0.038px;">Начисление зарплаты</div>
<div class="t" style="left:432.8px;top:406px;font-size:7.3333px;color:#484848;letter-spacing:-0.001px;">Савинская З.Ю., Мацкевич А.П., Усова С.Т., Пузырьков П.С., Калинка П.П., Дудковская Ю.П., Мойсеня...</div>
<div class="t" style="left:852px;top:406px;font-size:7.3333px;color:#484848;width:75.93181960449219px;text-align:right;letter-spacing:-0.068px;">7 493,25</div>
<div class="t" style="left:932px;top:406px;font-size:7.3333px;color:#484848;width:76.93181960449219px;text-align:right;letter-spacing:-0.068px;">1 098,61</div>
<div class="r" style="left:7px;top:416.77px;width:1006px;height:15.87px;background:#f8f8f8;"></div>
<svg style="left:0;top:0" width="1024" height="523"><rect x="11.3" y="422.27" width="7.3" height="5.6" rx="0.9" fill="#d6dae1" stroke="#bcc3cd" stroke-width="0.8"/><path d="M12.6 423.16999999999996 v3.8 M17.3 423.16999999999996 v3.8" stroke="#f4f5f7" stroke-width="0.7"/><path d="M16.0 426.77 l1.4 1.4 l2.6 -2.7" stroke="#2eaa3a" stroke-width="1.3" fill="none"/></svg>
<div class="t" style="left:6px;top:422px;font-size:7.3333px;color:#484848;width:73.45252399902344px;text-align:right;letter-spacing:-0.047px;">февр. 2019</div>
<div class="t" style="left:85.8px;top:422px;font-size:7.3333px;color:#484848;letter-spacing:-0.024px;">Начисление пособий</div>
<div class="t" style="left:432.8px;top:422px;font-size:7.3333px;color:#484848;"></div>
<svg style="left:0;top:0" width="1024" height="523"><rect x="11.3" y="438.14" width="7.3" height="5.6" rx="0.9" fill="#d6dae1" stroke="#bcc3cd" stroke-width="0.8"/><path d="M12.6 439.03999999999996 v3.8 M17.3 439.03999999999996 v3.8" stroke="#f4f5f7" stroke-width="0.7"/></svg>
<div class="t" style="left:6px;top:438px;font-size:7.3333px;color:#484848;width:73.47314407732928px;text-align:right;letter-spacing:-0.027px;">март 2019</div>
<div class="t" style="left:85.8px;top:438px;font-size:7.3333px;color:#484848;letter-spacing:-0.038px;">Начисление зарплаты</div>
<div class="t" style="left:432.8px;top:438px;font-size:7.3333px;color:#484848;letter-spacing:0.003px;">Дудковская Ю.П., Савинская З.Ю., Гаврош О.И., Калинка П.П., Усова С.Т., Мойсеня В.И., Пузырьков П...</div>
<div class="t" style="left:852px;top:438px;font-size:7.3333px;color:#484848;width:75.93181960449219px;text-align:right;letter-spacing:-0.068px;">8 330,00</div>
<div class="t" style="left:932px;top:438px;font-size:7.3333px;color:#484848;width:76.92840240885417px;text-align:right;letter-spacing:-0.072px;">935,79</div>
<div class="r" style="left:7px;top:448.51px;width:1006px;height:15.87px;background:#f8f8f8;"></div>
<svg style="left:0;top:0" width="1024" height="523"><rect x="11.3" y="454.01" width="7.3" height="5.6" rx="0.9" fill="#d6dae1" stroke="#bcc3cd" stroke-width="0.8"/><path d="M12.6 454.90999999999997 v3.8 M17.3 454.90999999999997 v3.8" stroke="#f4f5f7" stroke-width="0.7"/></svg>
<div class="t" style="left:6px;top:454px;font-size:7.3333px;color:#484848;width:73.44261624891493px;text-align:right;letter-spacing:-0.057px;">апр. 2019</div>
<div class="t" style="left:85.8px;top:454px;font-size:7.3333px;color:#484848;letter-spacing:-0.038px;">Начисление зарплаты</div>
<div class="t" style="left:432.8px;top:454px;font-size:7.3333px;color:#484848;letter-spacing:-0.083px;">Волчек А.В.</div>
<div class="t" style="left:852px;top:454px;font-size:7.3333px;color:#484848;width:75.92840240885417px;text-align:right;letter-spacing:-0.072px;">578,38</div>
<div class="t" style="left:932px;top:454px;font-size:7.3333px;color:#484848;width:76.92976928710938px;text-align:right;letter-spacing:-0.070px;">95,47</div>
<svg style="left:0;top:0" width="1024" height="523"><rect x="11.3" y="469.88" width="7.3" height="5.6" rx="0.9" fill="#d6dae1" stroke="#bcc3cd" stroke-width="0.8"/><path d="M12.6 470.78 v3.8 M17.3 470.78 v3.8" stroke="#f4f5f7" stroke-width="0.7"/><path d="M16.0 474.38 l1.4 1.4 l2.6 -2.7" stroke="#2eaa3a" stroke-width="1.3" fill="none"/></svg>
<div class="t" style="left:6px;top:469px;font-size:7.3333px;color:#484848;width:73.46608981119792px;text-align:right;letter-spacing:-0.034px;">янв. 2020</div>
<div class="t" style="left:85.8px;top:469px;font-size:7.3333px;color:#484848;letter-spacing:0.011px;">Простой сотрудников</div>
<div class="t" style="left:432.8px;top:469px;font-size:7.3333px;color:#484848;letter-spacing:0.049px;">Татарчук О.М.</div>
<div class="t" style="left:852px;top:469px;font-size:7.3333px;color:#484848;width:75.92976928710938px;text-align:right;letter-spacing:-0.070px;">14,20</div>
<div class="r" style="left:7px;top:480.25px;width:1006px;height:15.87px;background:#f8f8f8;"></div>
<svg style="left:0;top:0" width="1024" height="523"><rect x="11.3" y="485.75" width="7.3" height="5.6" rx="0.9" fill="#d6dae1" stroke="#bcc3cd" stroke-width="0.8"/><path d="M12.6 486.65 v3.8 M17.3 486.65 v3.8" stroke="#f4f5f7" stroke-width="0.7"/><path d="M16.0 490.25 l1.4 1.4 l2.6 -2.7" stroke="#2eaa3a" stroke-width="1.3" fill="none"/></svg>
<div class="t" style="left:6px;top:485px;font-size:7.3333px;color:#484848;width:73.46608981119792px;text-align:right;letter-spacing:-0.034px;">янв. 2020</div>
<div class="t" style="left:85.8px;top:485px;font-size:7.3333px;color:#484848;letter-spacing:0.063px;">Отгул</div>
<div class="t" style="left:432.8px;top:485px;font-size:7.3333px;color:#484848;letter-spacing:0.027px;">Пузырьков Павел Семнович</div>
<div class="r" style="left:960px;top:504.6px;width:54px;height:11.6px;background:linear-gradient(#ffffff,#f0f0f0);border:1px solid #c8c8c8;border-top:none;"></div>
<div class="r" style="left:973px;top:505px;width:1px;height:10.8px;background:#cdcdcd;"></div>
<div class="r" style="left:987px;top:505px;width:1px;height:10.8px;background:#cdcdcd;"></div>
<div class="r" style="left:1000px;top:505px;width:1px;height:10.8px;background:#cdcdcd;"></div>
<svg style="left:0;top:0" width="1024" height="523">
<path d="M964 508.5 h6 v0.9 h-6z M964.1 512.2 h5.8 l-2.9 -2.8z" fill="#3a3a3a"/>
<path d="M977 512.1 h6.2 l-3.1 -3.0z" fill="#3a3a3a"/>
<path d="M991 509.1 h5.5 l-2.75 2.8z" fill="#a9a9a9"/>
<path d="M1004 511.5 h5.4 v0.8 h-5.4z M1004.1 508.8 h5.2 l-2.6 2.5z" fill="#a9a9a9"/>
</svg>
</body></html>
